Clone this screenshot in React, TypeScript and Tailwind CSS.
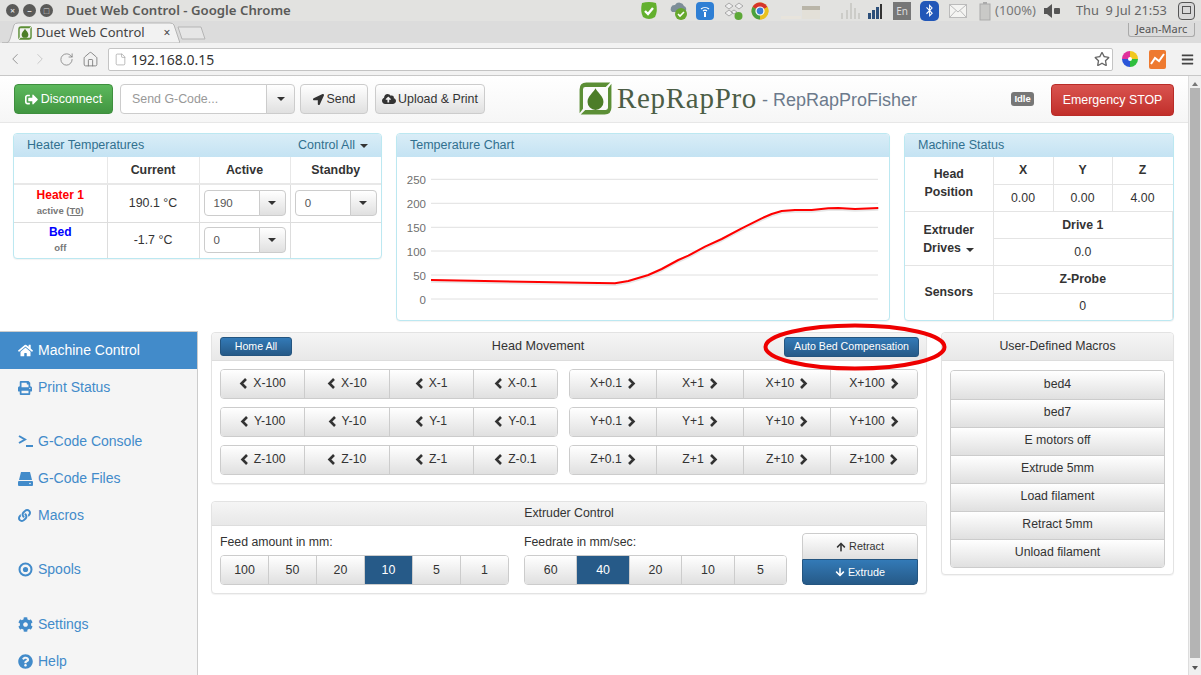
import React from "react";
import { ChevronLeft, ChevronRight, RotateCw, Home, File } from "lucide-react";
import {
  FaHome, FaPrint, FaLink, FaCog, FaQuestionCircle,
  FaLocationArrow, FaCloudUploadAlt, FaArrowUp, FaArrowDown,
  FaSignOutAlt, FaRegStar, FaBars, FaBluetoothB,
} from "react-icons/fa";

const Caret = ({ light = false }: { light?: boolean }) => (
  <span className={`inline-block w-0 h-0 border-x-[4px] border-x-transparent border-t-[4px] ${light ? "border-t-white" : "border-t-[#333]"}`} />
);

const Chev = ({ right = false }: { right?: boolean }) => (
  <svg width="9" height="11" viewBox="0 0 9 11" className="shrink-0">
    <path d={right ? "M2 1 L6.5 5.5 L2 10" : "M7 1 L2.5 5.5 L7 10"} stroke="#333" strokeWidth="2.6" fill="none" />
  </svg>
);

const Logo = ({ size }: { size: number }) => (
  <svg width={size} height={size} viewBox="1.5 1.5 29 29">
    <path d="M8 2 H29 L25 6 H7 Q5 6 5 8 V25 L2 29 V8 Q2 2 8 2 Z" fill="#5c8f36" />
    <path d="M24 30 H3 L7 26 H25 Q27 26 27 24 V7 L30 3 V24 Q30 30 24 30 Z" fill="#5c8f36" />
    <path d="M16 7 C18 11 23 14 23 19 A7 7 0 0 1 9 19 C9 14 14 11 16 7 Z" fill="#4c7d28" />
  </svg>
);

const WinBtn = ({ symbol }: { symbol: string }) => (
  <div className="w-[13px] h-[13px] rounded-full bg-[#5a5a58] flex items-center justify-center text-[#d8d8d8] text-[9px] leading-none font-bold">{symbol}</div>
);

const Tray = () => (
  <div className="flex items-center h-full">
    <svg className="ml-[639px]" width="20" height="20" viewBox="0 0 20 20"><path d="M3 2 Q10 0 17 2 Q19 10 16 16 Q10 20 4 16 Q1 10 3 2 Z" fill="#63b02e" /><path d="M6 10 L9 13 L14 7" stroke="#fff" strokeWidth="2.4" fill="none" /></svg>
    <svg className="ml-[10px]" width="20" height="20" viewBox="0 0 20 20"><path d="M3 11 A4 4 0 0 1 6 4 A5 5 0 0 1 15 5 A3.5 3.5 0 0 1 16 11 Z" fill="#7d8e98" /><circle cx="12" cy="13" r="6" fill="#66a82c" /><path d="M9 13 L11 15 L15 11" stroke="#fff" strokeWidth="1.6" fill="none" /></svg>
    <svg className="ml-[6px]" width="20" height="20" viewBox="0 0 20 20"><rect x="1" y="1" width="18" height="18" rx="4" fill="#2f7fd4" /><path d="M6 8 A6 6 0 0 1 14 8 M8 10 A3 3 0 0 1 12 10" stroke="#fff" strokeWidth="1.1" fill="none" /><rect x="9" y="11" width="2" height="5" fill="#fff" /></svg>
    <svg className="ml-[9px]" width="20" height="20" viewBox="0 0 20 20"><path d="M5 2 L9 5 L5 8 L1 5 Z M15 2 L19 5 L15 8 L11 5 Z M5 9 L9 12 L5 15 L1 12 Z M10 13 L13 11 L10 9 L7 11 Z" fill="#eee" stroke="#999" strokeWidth="0.8" /><circle cx="14.5" cy="15" r="4" fill="#5da838" /></svg>
    <svg className="ml-[7px]" width="18" height="18" viewBox="0 0 18 18"><circle cx="9" cy="9" r="8.5" fill="#e2b51f" /><path d="M9 9 L1.5 5 A8.5 8.5 0 0 1 16.5 5 Z" fill="#d7352b" /><path d="M9 9 L16.5 5 A8.5 8.5 0 0 1 9 17.5 Z" fill="#e8c11f" /><path d="M9 9 L9 17.5 A8.5 8.5 0 0 1 1.5 5 Z" fill="#4aa13f" /><circle cx="9" cy="9" r="4" fill="#3b7fd6" stroke="#fff" strokeWidth="1.2" /></svg>
    <svg className="ml-[12px]" width="46" height="18" viewBox="0 0 46 18"><rect x="21" y="4" width="18" height="4" fill="#b9b5a8" /><rect x="21" y="8" width="18" height="9" fill="#e3e0d8" /><rect x="0" y="14" width="20" height="3" fill="#e8e4dc" /></svg>
    <svg className="ml-[11px]" width="24" height="18" viewBox="0 0 24 18" stroke="#c5c5c0" strokeWidth="1.5"><path d="M4 17 V11 M9 17 V8 M13 17 V1 M17 17 V6 M21 17 V11" /></svg>
    <svg className="ml-[5px]" width="16" height="18" viewBox="0 0 16 18"><rect x="1" y="11" width="3" height="6" fill="#2c4f7a" /><rect x="5" y="8" width="3" height="9" fill="#2c4f7a" /><rect x="9" y="5" width="3" height="12" fill="#2c4f7a" /><rect x="13" y="2" width="2" height="15" fill="#333" /></svg>
    <div className="ml-[10px] w-[18px] h-[18px] bg-[#777] text-[#ddd] text-[10px] leading-[18px] text-center">En</div>
    <div className="ml-[9px] w-[19px] h-[20px] rounded-[5px] bg-[#2257b8] text-white flex items-center justify-center"><FaBluetoothB size={13} /></div>
    <svg className="ml-[10px]" width="18" height="14" viewBox="0 0 18 14"><rect x="0.5" y="0.5" width="17" height="13" fill="#f4f4f2" stroke="#bbb" /><path d="M1 1 L9 8 L17 1 M1 13 L7 6.5 M17 13 L11 6.5" stroke="#bbb" fill="none" /></svg>
    <svg className="ml-[12px]" width="13" height="20" viewBox="0 0 13 20"><rect x="1" y="3" width="10" height="16" fill="#c9c9c7" stroke="#aaa" /><rect x="4" y="1" width="4" height="2" fill="#aaa" /></svg>
    <span className="ml-[3px] text-[13px] text-[#777]">(100%)</span>
    <svg className="ml-[7px]" width="18" height="16" viewBox="0 0 18 16"><path d="M1 5 H4 L9 1 V15 L4 11 H1 Z" fill="#555" /><rect x="11" y="5" width="6" height="6" rx="1" fill="#555" /></svg>
    <span className="ml-[15px] text-[12.8px] text-[#666] whitespace-nowrap">Thu&nbsp; 9 Jul 21:53</span>
  </div>
);

const Chrome = () => (
  <div className="shrink-0">
    <div className="h-[21px] bg-[#e2e2e0] flex items-center relative" style={{ fontFamily: '"Noto Sans", sans-serif' }}>
      <div className="absolute left-[6px] top-[4px] flex gap-[4px]">
        <WinBtn symbol="×" />
        <WinBtn symbol="–" />
        <WinBtn symbol="□" />
      </div>
      <div className="absolute left-[66px] top-[1px] text-[13.2px] leading-[19px] font-semibold text-[#5a5a58] whitespace-nowrap">Duet Web Control - Google Chrome</div>
      <Tray />
      <div className="absolute left-[1178px] top-[2px] w-[17px] h-[18px] rounded-[4px] border border-[#555] bg-[#d8d8d8] flex items-center justify-center">
        <div className="w-[9px] h-[8px] border border-[#555] mb-[2px]" />
      </div>
    </div>
    <div className="h-[22px] bg-[#dcdcdc] flex items-end relative" style={{ fontFamily: '"Noto Sans", sans-serif' }}>
      <div className="relative w-[180px] h-[21px] flex items-center pl-[18px]">
        <svg className="absolute left-0 top-0" width="180" height="21" viewBox="0 0 180 21"><path d="M2 21 H6 Q9 21 10 17 L14 3 Q15 1 18 1 H170 Q173 1 174 3 L180 21 Z" fill="#f2f2f2" stroke="#b5b5b5" /></svg>
        <div className="relative"><Logo size={14} /></div>
        <span className="relative ml-[4px] text-[13px] text-[#444] whitespace-nowrap">Duet Web Control</span>
        <span className="relative ml-[19px] text-[12px] text-[#444]">×</span>
      </div>
      <svg className="-ml-[3px] mb-[3px]" width="30" height="14" viewBox="0 0 30 14"><path d="M1 1 H24 L28 13 H5 Z" fill="#e6e6e6" stroke="#b5b5b5" /></svg>
      <div className="absolute left-[1128px] top-[2px] w-[67px] h-[14px] border border-[#aaa] border-t-0 rounded-b-[3px] text-[11px] leading-[12px] text-center text-[#555]">Jean-Marc</div>
    </div>
    <div className="h-[33px] bg-[#f2f2f2] border-b border-[#c8c8c8] flex items-center" style={{ fontFamily: '"Noto Sans", sans-serif' }}>
      <ChevronLeft className="ml-[6px] text-[#777]" size={18} strokeWidth={1} />
      <ChevronRight className="ml-[7px] text-[#bbb]" size={18} strokeWidth={1} />
      <RotateCw className="ml-[10px] text-[#777]" size={15} strokeWidth={1.2} />
      <Home className="ml-[8px] text-[#777]" size={17} strokeWidth={1.2} />
      <div className="ml-[9px] w-[1005px] h-[23px] bg-white border border-[#c4c4c4] rounded-[2px] flex items-center pl-[5px] pr-[1px]">
        <File className="text-[#999]" size={13} strokeWidth={1.2} />
        <span className="ml-[4px] text-[14px] text-[#333]">192.168.0.15</span>
        <FaRegStar className="ml-auto mr-[1px] text-[#666]" size={16} />
      </div>
      <svg className="ml-[8px]" width="18" height="18" viewBox="0 0 18 18"><path d="M9 9 L9 1 A8 8 0 0 1 17 9 Z" fill="#f2c81e" /><path d="M9 9 L17 9 A8 8 0 0 1 9 17 Z" fill="#2fbf3e" /><path d="M9 9 L9 17 A8 8 0 0 1 1 9 Z" fill="#2a55d8" /><path d="M9 9 L1 9 A8 8 0 0 1 9 1 Z" fill="#e0309a" /><circle cx="9" cy="9" r="2" fill="#fff" /></svg>
      <svg className="ml-[10px]" width="17" height="19" viewBox="0 0 17 19"><rect width="17" height="19" rx="2" fill="#ee7a30" /><path d="M2 14 L6 8 L10 11 L15 4" stroke="#fff" strokeWidth="2" fill="none" /></svg>
      <FaBars className="ml-[15px] text-[#444]" size={13} />
    </div>
  </div>
);

const btn = "bg-linear-to-b from-white to-[#e0e0e0] border border-[#ccc] text-[#333] flex items-center justify-center";

const Navbar = () => (
  <div className="h-[47px] bg-linear-to-b from-white to-[#f6f6f6] border-b border-[#e7e7e7] flex items-start pt-[8px] pl-[14px] shrink-0">
    <div className="w-[99px] h-[30px] rounded-[4px] bg-linear-to-b from-[#5cb85c] to-[#419641] border border-[#3e8f3e] text-white text-[12.4px] flex items-center justify-center gap-[3px]">
      <FaSignOutAlt size={13} /> Disconnect
    </div>
    <div className="ml-[7px] flex h-[30px]">
      <div className="w-[147px] bg-white border border-[#ccc] rounded-l-[4px] text-[12.4px] text-[#999] flex items-center pl-[11px]">Send G-Code...</div>
      <div className={`${btn} w-[29px] -ml-px rounded-r-[4px]`}><Caret /></div>
    </div>
    <div className={`${btn} ml-[5px] w-[68px] h-[30px] rounded-[4px] text-[12.4px] gap-[3px]`}><FaLocationArrow size={11} /> Send</div>
    <div className={`${btn} ml-[7px] w-[110px] h-[30px] rounded-[4px] text-[12.4px] gap-[2px]`}><FaCloudUploadAlt size={14} /> Upload &amp; Print</div>
    <div className="ml-[94px] mt-[-2px]"><Logo size={33} /></div>
    <span className="ml-[5px] mt-[-5px] text-[29px] leading-[38px] text-[#4c5d46] tracking-[0.7px] whitespace-nowrap" style={{ fontFamily: '"Liberation Serif", serif' }}>RepRapPro</span>
    <span className="ml-[5px] text-[18px] leading-[32px] text-[#6c7a8c] whitespace-nowrap">- RepRapProFisher</span>
    <div className="ml-[94px] mt-[8px] w-[23px] h-[14px] rounded-[3px] bg-[#777] text-white text-[9.5px] font-bold leading-[14px] text-center">Idle</div>
    <div className="ml-[17px] w-[123px] h-[32px] rounded-[4px] bg-linear-to-b from-[#d9534f] to-[#c12e2a] border border-[#b92c28] text-white text-[12.4px] flex items-center justify-center whitespace-nowrap">Emergency STOP</div>
  </div>
);

const infoPanel = "border border-[#bce8f1] rounded-[4px] bg-white overflow-hidden shadow-[0_1px_1px_rgba(0,0,0,0.05)]";
const infoHead = "h-[23px] bg-linear-to-b from-[#d9edf7] to-[#c4e3f3] text-[#31708f] text-[12.5px] flex items-center justify-between px-[13px]";

const Select = ({ value, w }: { value: string; w: string }) => (
  <div className={`flex h-[26px] ${w} mx-auto`}>
    <div className="flex-1 border border-[#ccc] rounded-l-[4px] text-[11.5px] text-[#555] text-left pl-[9px] leading-[24px] bg-white">{value}</div>
    <div className={`${btn} w-[27px] -ml-px rounded-r-[4px]`}><Caret /></div>
  </div>
);

const Heaters = () => (
  <div className={`${infoPanel} w-[369px] h-[126px]`}>
    <div className={infoHead}>
      <span>Heater Temperatures</span>
      <span className="flex items-center gap-[5px]">Control All <Caret /></span>
    </div>
    <table className="w-full table-fixed border-collapse text-center text-[12.4px] text-[#333]">
      <colgroup><col className="w-[93px]" /><col className="w-[92px]" /><col className="w-[91px]" /><col /></colgroup>
      <tbody>
        <tr className="h-[27px] font-bold">
          <td className="border-b-2 border-[#e8e8e8]"></td>
          <td className="border-l border-b-2 border-[#e8e8e8]">Current</td>
          <td className="border-l border-b-2 border-[#e8e8e8]">Active</td>
          <td className="border-l border-b-2 border-[#e8e8e8]">Standby</td>
        </tr>
        <tr className="h-[38px]">
          <td className="border-b border-[#ddd] leading-[16px]">
            <div className="text-[#ff0000] font-bold text-[12px]">Heater 1</div>
            <div className="text-[#777] font-bold text-[9.5px]">active (<u>T0</u>)</div>
          </td>
          <td className="border-l border-b border-[#ddd]">190.1 °C</td>
          <td className="border-l border-b border-[#ddd]"><Select value="190" w="w-[82px]" /></td>
          <td className="border-l border-b border-[#ddd]"><Select value="0" w="w-[82px]" /></td>
        </tr>
        <tr className="h-[36px]">
          <td className="leading-[16px]">
            <div className="text-[#0000ff] font-bold text-[12px]">Bed</div>
            <div className="text-[#777] font-bold text-[9.5px]">off</div>
          </td>
          <td className="border-l border-[#ddd]">-1.7 °C</td>
          <td className="border-l border-[#ddd]"><Select value="0" w="w-[82px]" /></td>
          <td className="border-l border-[#ddd]"></td>
        </tr>
      </tbody>
    </table>
  </div>
);

const pts = "34,123 74.7,123.7 141.3,125 184.7,125.7 218,126.3 231.3,124 251.3,118 264.7,112 281.3,103 291.3,98.7 308,89.7 324.7,82 344.7,71.3 364.7,61.3 374.7,57 384.7,54 398,53 414.7,53 431.3,51.3 441.3,51 458,52 481.3,51";

const Chart = () => {
  const grid: [string, number][] = [["250", 22.3], ["200", 46.3], ["150", 70.3], ["100", 94], ["50", 118], ["0", 142]];
  return (
    <div className={`${infoPanel} w-[494px] h-[188px]`}>
      <div className={infoHead}><span>Temperature Chart</span></div>
      <svg width="492" height="163" viewBox="0 0 492 163">
        {grid.map(([label, y]) => (
          <g key={label}>
            <line x1="34" x2="481" y1={y} y2={y} stroke="#e0e0e0" strokeWidth="1" />
            <text x="29" y={y + 5} textAnchor="end" fontSize="11.5" fill="#6f6f6f" fontFamily="Liberation Sans, sans-serif">{label}</text>
          </g>
        ))}
        <polyline points={pts} fill="none" stroke="#e8e8e8" strokeWidth="2.5" strokeLinejoin="round" transform="translate(0 1.5)" />
        <polyline points={pts} fill="none" stroke="#ff0000" strokeWidth="2" strokeLinejoin="round" />
      </svg>
    </div>
  );
};

const th = "border-[#e4e4e4] font-bold";

const Status = () => (
  <div className={`${infoPanel} w-[270px] h-[188px]`}>
    <div className={infoHead}><span>Machine Status</span></div>
    <table className="w-full table-fixed border-collapse text-center text-[12.3px] text-[#333] leading-[18px]">
      <colgroup><col className="w-[88px]" /><col className="w-[60px]" /><col className="w-[59px]" /><col /></colgroup>
      <tbody>
        <tr className="h-[27px]">
          <td rowSpan={2} className={`${th} border-b pb-[2px]`}>Head<br />Position</td>
          <td className={`${th} border-l border-b`}>X</td>
          <td className={`${th} border-l border-b`}>Y</td>
          <td className={`${th} border-l border-b`}>Z</td>
        </tr>
        <tr className="h-[27px]">
          <td className="border-l border-b border-[#e4e4e4]">0.00</td>
          <td className="border-l border-b border-[#e4e4e4]">0.00</td>
          <td className="border-l border-b border-[#e4e4e4]">4.00</td>
        </tr>
        <tr className="h-[27px]">
          <td rowSpan={2} className={`${th} border-b pt-[2px]`}>Extruder<br />Drives <span className="inline-block ml-[2px] align-middle"><Caret /></span></td>
          <td colSpan={3} className={`${th} border-l border-b border-r`}>Drive 1</td>
        </tr>
        <tr className="h-[27px]">
          <td colSpan={3} className="border-l border-b border-r border-[#e4e4e4]">0.0</td>
        </tr>
        <tr className="h-[28px]">
          <td rowSpan={2} className={`${th} pb-[2px]`}>Sensors</td>
          <td colSpan={3} className={`${th} border-l border-b border-r`}>Z-Probe</td>
        </tr>
        <tr className="h-[27px]">
          <td colSpan={3} className="border-l border-r border-[#e4e4e4] pb-[1px]">0</td>
        </tr>
      </tbody>
    </table>
  </div>
);

const navItems: { label: string; icon: React.ReactNode; gap: string; active?: boolean }[] = [
  { label: "Machine Control", icon: <FaHome size={15} />, gap: "", active: true },
  { label: "Print Status", icon: <FaPrint size={14} />, gap: "" },
  {
    label: "G-Code Console",
    icon: <svg width="15" height="13" viewBox="0 0 15 13"><path d="M1 1 L7 4.5 L1 8" stroke="currentColor" strokeWidth="2" fill="none" /><rect x="8" y="10" width="7" height="2" fill="currentColor" /></svg>,
    gap: "mt-[17px]",
  },
  {
    label: "G-Code Files",
    icon: <svg width="15" height="14" viewBox="0 0 15 14"><path d="M3 0 H12 L14 8 H1 Z" fill="currentColor" /><rect x="0" y="9" width="15" height="5" rx="1" fill="currentColor" /><circle cx="12" cy="11.5" r="0.8" fill="#f5f5f5" /></svg>,
    gap: "",
  },
  { label: "Macros", icon: <FaLink size={13} />, gap: "" },
  {
    label: "Spools",
    icon: <svg width="15" height="15" viewBox="0 0 15 15"><circle cx="7.5" cy="7.5" r="6" stroke="currentColor" strokeWidth="2" fill="none" /><circle cx="7.5" cy="7.5" r="2.6" fill="currentColor" /></svg>,
    gap: "mt-[17px]",
  },
  { label: "Settings", icon: <FaCog size={15} />, gap: "mt-[18px]" },
  { label: "Help", icon: <FaQuestionCircle size={15} />, gap: "" },
];

const Sidebar = () => (
  <div className="w-[198px] shrink-0 bg-[#f5f5f5] border-r border-t border-[#ccc] h-full">
    {navItems.map((n) => (
      <div
        key={n.label}
        className={`h-[37px] flex items-center pl-[18px] text-[14px] ${n.gap} ${n.active ? "bg-[#428bca] text-white" : "text-[#428bca]"}`}
      >
        <span className="w-[20px] flex items-center">{n.icon}</span>
        {n.label}
      </div>
    ))}
  </div>
);

const panel = "border border-[#e3e3e3] rounded-[4px] bg-white shadow-[0_1px_1px_rgba(0,0,0,0.05)]";
const panelHead = "bg-linear-to-b from-[#f5f5f5] to-[#e8e8e8] border-b border-[#ddd] rounded-t-[4px] text-[12.3px] text-[#333] flex items-center";
const blue = "bg-linear-to-b from-[#337ab7] to-[#265a88] border border-[#245580] rounded-[3px] text-white text-[10.6px] flex items-center justify-center whitespace-nowrap";

const Row = ({ axis }: { axis: string }) => (
  <div className="flex justify-between">
    <div className="flex w-[338px] h-[30px] rounded-[4px] overflow-hidden border border-[#ccc]">
      {["-100", "-10", "-1", "-0.1"].map((v, i) => (
        <div key={v} className={`flex-1 pb-[1px] bg-linear-to-b from-white to-[#e0e0e0] text-[#333] text-[12.2px] flex items-center justify-center gap-[5px] ${i ? "border-l border-[#ccc]" : ""}`}>
          <Chev />{axis}{v}
        </div>
      ))}
    </div>
    <div className="flex w-[349px] h-[30px] rounded-[4px] overflow-hidden border border-[#ccc]">
      {["+0.1", "+1", "+10", "+100"].map((v, i) => (
        <div key={v} className={`flex-1 pb-[1px] bg-linear-to-b from-white to-[#e0e0e0] text-[#333] text-[12.2px] flex items-center justify-center gap-[5px] ${i ? "border-l border-[#ccc]" : ""}`}>
          {axis}{v}<Chev right />
        </div>
      ))}
    </div>
  </div>
);

const HeadMovement = () => (
  <div className={`${panel} relative h-[152px]`}>
    <div className={`${panelHead} h-[28px] justify-between pl-[8px] pr-[7px]`}>
      <div className={`${blue} w-[72px] h-[19px]`}>Home All</div>
      <span className="text-[12.6px]">Head Movement</span>
      <div className={`${blue} w-[135px] h-[20px]`}>Auto Bed Compensation</div>
    </div>
    <div className="px-[8px] pt-[8px] flex flex-col gap-[8px]">
      <Row axis="X" />
      <Row axis="Y" />
      <Row axis="Z" />
    </div>
    <svg className="absolute left-[551px] top-[-10px] pointer-events-none" width="184" height="48" viewBox="0 0 184 48">
      <ellipse cx="92" cy="24" rx="89.5" ry="21.5" fill="none" stroke="#ee0000" strokeWidth="4" />
    </svg>
  </div>
);

const Segment = ({ values, active, w }: { values: string[]; active: string; w: string }) => (
  <div className={`flex ${w} h-[30px] rounded-[4px] overflow-hidden border border-[#ccc]`}>
    {values.map((v, i) => (
      <div key={v} className={`flex-1 text-[12.4px] flex items-center justify-center ${i ? "border-l border-[#ccc]" : ""} ${v === active ? "bg-[#265a88] text-white" : "bg-linear-to-b from-white to-[#e0e0e0] text-[#333]"}`}>{v}</div>
    ))}
  </div>
);

const Extruder = () => (
  <div className={`${panel} mt-[17px] h-[93px]`}>
    <div className={`${panelHead} h-[24px] justify-center`}>Extruder Control</div>
    <div className="flex items-end pl-[8px] pt-[7px]">
      <div>
        <div className="text-[12.3px] text-[#333] leading-[18px] mb-[4px]">Feed amount in mm:</div>
        <Segment values={["100", "50", "20", "10", "5", "1"]} active="10" w="w-[289px]" />
      </div>
      <div className="ml-[15px]">
        <div className="text-[12.3px] text-[#333] leading-[18px] mb-[4px]">Feedrate in mm/sec:</div>
        <Segment values={["60", "40", "20", "10", "5"]} active="40" w="w-[263px]" />
      </div>
      <div className="ml-[15px] w-[116px] rounded-[4px] overflow-hidden">
        <div className="h-[26px] bg-linear-to-b from-white to-[#e0e0e0] border border-[#ccc] border-b-0 rounded-t-[4px] text-[#333] text-[10.8px] flex items-center justify-center gap-[3px]"><FaArrowUp size={10} /> Retract</div>
        <div className="h-[26px] bg-linear-to-b from-[#337ab7] to-[#265a88] border border-[#245580] rounded-b-[4px] text-white text-[10.8px] flex items-center justify-center gap-[3px]"><FaArrowDown size={10} /> Extrude</div>
      </div>
    </div>
  </div>
);

const macros = ["bed4", "bed7", "E motors off", "Extrude 5mm", "Load filament", "Retract 5mm", "Unload filament"];

const Macros = () => (
  <div className={`${panel} ml-[14px] w-[233px] h-[243px]`}>
    <div className={`${panelHead} h-[28px] justify-center`}>User-Defined Macros</div>
    <div className="mx-[8px] mt-[9px] rounded-[4px] overflow-hidden border border-[#ccc]">
      {macros.map((m, i) => (
        <div key={m} className={`h-[28px] pb-[2px] bg-linear-to-b from-white to-[#e0e0e0] text-[12.3px] text-[#333] flex items-center justify-center ${i ? "border-t border-[#ccc]" : ""}`}>{m}</div>
      ))}
    </div>
  </div>
);

const Scrollbar = () => (
  <div className="w-[13px] shrink-0 bg-[#f0f0f0] border-l border-[#ddd] flex flex-col items-center">
    <span className="mt-[6px] w-0 h-0 border-x-[3px] border-x-transparent border-b-[4px] border-b-[#777]" />
    <div className="mt-[2px] w-[10px] h-[570px] bg-[#b4b4b4]" />
    <span className="mt-[8px] w-0 h-0 border-x-[3px] border-x-transparent border-t-[4px] border-t-[#555]" />
  </div>
);

export default function App() {
  return (
    <div className="w-[1201px] h-[675px] overflow-hidden flex flex-col bg-white" style={{ fontFamily: '"Liberation Sans", Arial, sans-serif' }}>
      <Chrome />
      <div className="flex-1 flex min-h-0">
        <div className="flex-1 flex flex-col min-w-0">
          <Navbar />
          <div className="flex items-start gap-[14px] pl-[13px] pt-[10px] shrink-0">
            <Heaters />
            <Chart />
            <Status />
          </div>
          <div className="flex-1 flex mt-[10px] min-h-0">
            <Sidebar />
            <div className="flex items-start pl-[13px] pt-[1px]">
              <div className="w-[716px]">
                <HeadMovement />
                <Extruder />
              </div>
              <Macros />
            </div>
          </div>
        </div>
        <Scrollbar />
      </div>
    </div>
  );
}
